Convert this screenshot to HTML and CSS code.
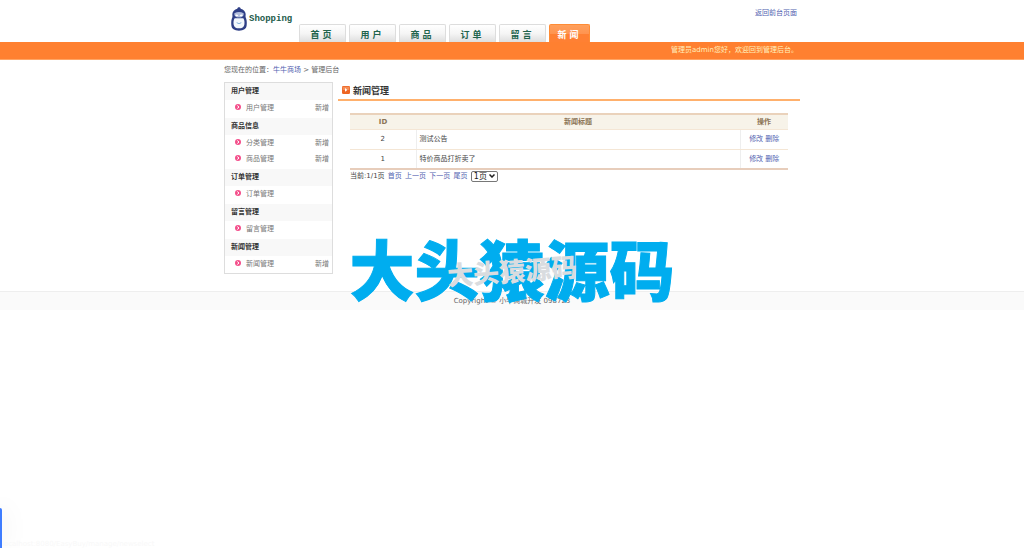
FILE: index.html
```html
<!DOCTYPE html>
<html lang="zh-CN">
<head>
<meta charset="utf-8">
<title>管理后台</title>
<link rel="stylesheet" href="styles.css">
</head>
<body>
<svg class="defs" aria-hidden="true">
  <symbol id="dot" viewBox="0 0 12 12"><circle cx="6" cy="6" r="6" fill="#f4508c"/><path d="M4.500 3l3.500 3-3.500 3" fill="none" stroke="#fff" stroke-width="2"/></symbol>
</svg>
<header class="header wrap">
  <a class="logo" href="#">
    <svg class="penguin" viewBox="0 0 48 72" aria-hidden="true">
      <path d="M24 1c3 0 5 2 5 4 9 2 14 8 15 16 0 5-1 7 0 10 3 6 4 14 3 24-1 11-9 16-23 16S2 66 1 55C0 45 1 37 4 31c1-3 0-5 0-10C5 13 10 7 19 5c0-2 2-4 5-4z" fill="#2f3f86"/>
      <path d="M10 19q14-8 28 0 2 12-14 13Q8 31 10 19z" fill="#b3bedd"/>
      <path d="M12 24q5-4 10 1-4 6-10-1zM26 25q5-5 10-1-6 7-10 1z" fill="#fff"/>
      <path d="M11 34h26c4 6 4 13 3 19-1 7-7 11-16 11S9 60 8 53c-1-6-1-13 3-19z" fill="#f4f8fd"/>
      <path d="M20 30h8l-4 4z" fill="#5069a5"/>
      <path d="M17 47q7 6 14 0" fill="none" stroke="#83b3dc" stroke-width="3"/>
    </svg>
    <span>Shopping</span>
  </a>
  <nav class="tabs">
    <a href="#">首 页</a><a href="#">用 户</a><a href="#">商 品</a><a href="#">订 单</a><a href="#">留 言</a><a class="current" href="#">新 闻</a>
  </nav>
  <a class="back" href="#">返回前台页面</a>
</header>
<div class="band"><p class="wrap">管理员admin您好，欢迎回到管理后台。</p></div>
<div class="crumbs wrap">您现在的位置：<a href="#">牛牛商场</a> &gt; 管理后台</div>
<div class="content wrap">
  <aside class="menu">
    <h3>用户管理</h3>
    <ul><li><svg><use href="#dot"/></svg><a href="#">用户管理</a><a class="add" href="#">新增</a></li></ul>
    <h3>商品信息</h3>
    <ul>
      <li><svg><use href="#dot"/></svg><a href="#">分类管理</a><a class="add" href="#">新增</a></li>
      <li><svg><use href="#dot"/></svg><a href="#">商品管理</a><a class="add" href="#">新增</a></li>
    </ul>
    <h3>订单管理</h3>
    <ul><li><svg><use href="#dot"/></svg><a href="#">订单管理</a></li></ul>
    <h3>留言管理</h3>
    <ul><li><svg><use href="#dot"/></svg><a href="#">留言管理</a></li></ul>
    <h3>新闻管理</h3>
    <ul><li><svg><use href="#dot"/></svg><a href="#">新闻管理</a><a class="add" href="#">新增</a></li></ul>
  </aside>
  <main class="main">
    <h2>
      <svg viewBox="0 0 24 24" aria-hidden="true"><rect width="24" height="24" rx="4" fill="#ed6523"/><path d="M2 12V4q0-2 2-2h16q2 0 2 2v8z" fill="#f58d55"/><path d="M9 6l7 6-7 5z" fill="#fff"/></svg>
      新闻管理
    </h2>
    <div class="manage">
      <table class="list">
        <thead><tr><th class="id">ID</th><th>新闻标题</th><th class="ops">操作</th></tr></thead>
        <tbody>
          <tr><td class="id">2</td><td>测试公告</td><td class="ops"><a href="#">修改</a> <a href="#">删除</a></td></tr>
          <tr><td class="id">1</td><td>特价商品打折卖了</td><td class="ops"><a href="#">修改</a> <a href="#">删除</a></td></tr>
        </tbody>
      </table>
      <div class="pager">当前:1/1页 <a href="#">首页</a> <a href="#">上一页</a> <a href="#">下一页</a> <a href="#">尾页</a>
        <select aria-label="页码"><option>1页</option></select>
      </div>
    </div>
  </main>
</div>
<footer class="footer">Copyright © 小牛商城开发 098723
  <div class="mark" aria-hidden="true">大头猿源码<span class="submark">大头猿源码</span></div>
</footer>
<div class="edge"></div>
<div class="status">localhost:8080/EasyBuy/manage/newselect</div>
</body>
</html>
```

FILE: styles.css
```css
* { box-sizing: border-box; }
body {
  margin: 0;
  min-height: 100vh;
  position: relative;
  overflow-x: hidden;
  background: #fff;
  color: #666;
  font: 7px/16px "DejaVu Sans", "Noto Sans CJK SC", sans-serif;
}
h2, h3, p, ul { margin: 0; padding: 0; }
a { color: #5263b0; text-decoration: none; }
.defs { position: absolute; width: 0; height: 0; }
.wrap { max-width: 576px; margin: 0 auto; }

.header { display: flex; height: 42px; }
.logo {
  display: flex;
  width: 75px;
  padding: 7px 0 0 7px;
  gap: 2px;
  color: #1c5b4a;
  font: bold 9px/24px "Liberation Mono", monospace;
}
.penguin { flex: none; width: 16px; height: 24px; }
.tabs { display: flex; align-items: flex-end; gap: 3px; }
.tabs a {
  width: 47px;
  height: 18px;
  padding-right: 3px;
  border: 1px solid #ddd;
  border-bottom: 0;
  border-radius: 2px 2px 0 0;
  background: linear-gradient(#fff, #f5f5f5 50%, #dedede);
  color: #21644c;
  font-size: 9px;
  font-weight: bold;
  line-height: 20px;
  text-align: center;
}
.tabs .current {
  width: 41px;
  border-color: #ff8c35;
  background: linear-gradient(#ffa05c, #ff9450 50%, #ff8033 55%);
  color: #fff;
}
.back { margin-left: auto; padding: 5px 3px 0 0; }
.band { background: #ff8030; color: #fff0bd; border-bottom: 1px solid #ffa565; }
.band p { padding-right: 2px; line-height: 17px; text-align: right; }
.crumbs { padding: 2px 0 4px; }

.content { display: flex; align-items: flex-start; gap: 5px; }
.menu { flex: none; width: 109px; border: 1px solid #ddd; }
.menu h3 {
  padding-left: 6px;
  background: #f8f8f8;
  color: #333;
  font-size: 7px;
  line-height: 17px;
}
.menu ul { padding-bottom: 2px; list-style: none; }
.menu ul:last-child { padding-bottom: 1px; }
.menu li { display: flex; align-items: center; padding: 0 3px 0 10px; }
.menu li svg { width: 6px; height: 6px; margin: 0 5px 2px 0; }
.menu a { color: #777; }
.menu .add { margin-left: auto; }

.main { flex: 1; min-width: 0; }
.main h2 {
  display: flex;
  align-items: center;
  gap: 3px;
  padding: 1px 4px 0;
  border-bottom: 2px solid #ffb06c;
  color: #333;
  font-size: 9px;
  line-height: 16px;
}
.main h2 svg { width: 8px; height: 8px; margin-bottom: 2px; }
.manage { padding: 12px 12px 0; }
.list {
  width: 100%;
  border-collapse: collapse;
  border-top: 2px solid #ead2bb;
  border-bottom: 2px solid #e7cdbb;
  table-layout: fixed;
  line-height: 12px;
}
.list th { height: 15px; padding: 0; background: #f7f3e9; color: #8b7455; border-bottom: 1px solid #f4e6d5; }
.list td { height: 20px; padding: 0 3px; color: #444; border-bottom: 1px solid #f4e6d5; border-left: 1px solid #eee; }
.list td.id { border-left: 0; }
.list .id { width: 66px; text-align: center; }
.list .ops { width: 48px; text-align: center; }
.pager { line-height: 12px; color: #444; }
.pager a { margin-left: 1px; }
.pager select {
  height: 11px;
  width: 27px;
  margin-left: 1px;
  padding: 0 2px;
  border: 1px solid #777;
  border-radius: 2px;
  appearance: none;
  background: #fff url("data:image/svg+xml,%3Csvg xmlns='http://www.w3.org/2000/svg' viewBox='0 0 12 8'%3E%3Cpath d='M1 1l5 5 5-5' fill='none' stroke='%23222' stroke-width='3'/%3E%3C/svg%3E") no-repeat right 2px center / 6px 4px;
  color: #222;
  font: 8px "DejaVu Sans", "Noto Sans CJK SC", sans-serif;
  line-height: 9px;
  vertical-align: middle;
}

.footer {
  position: relative;
  margin-top: 17px;
  border-top: 1px solid #eee;
  background: #fafafa;
  line-height: 18px;
  text-align: center;
}
.mark {
  position: absolute;
  left: 0;
  right: 0;
  top: -57px;
  color: #00adef;
  -webkit-text-stroke: 1px #00adef;
  font: 900 65px/64px "Noto Sans CJK SC", sans-serif;
  text-align: center;
  white-space: nowrap;
}
.submark {
  position: absolute;
  left: 0;
  right: 0;
  top: 20px;
  color: #d9dcdf;
  -webkit-text-stroke: 0;
  font-size: 26px;
  line-height: 30px;
  transform: rotate(-4deg);
}
.edge {
  position: absolute;
  left: 0;
  bottom: 0;
  width: 2px;
  height: 40px;
  border-radius: 0 2px 0 0;
  background: #3f7dff;
  box-shadow: 0 0 22px #bbb;
}
.status { position: absolute; left: 2px; bottom: 0; color: #f8f8f8; font-size: 7px; line-height: 8px; }
```
